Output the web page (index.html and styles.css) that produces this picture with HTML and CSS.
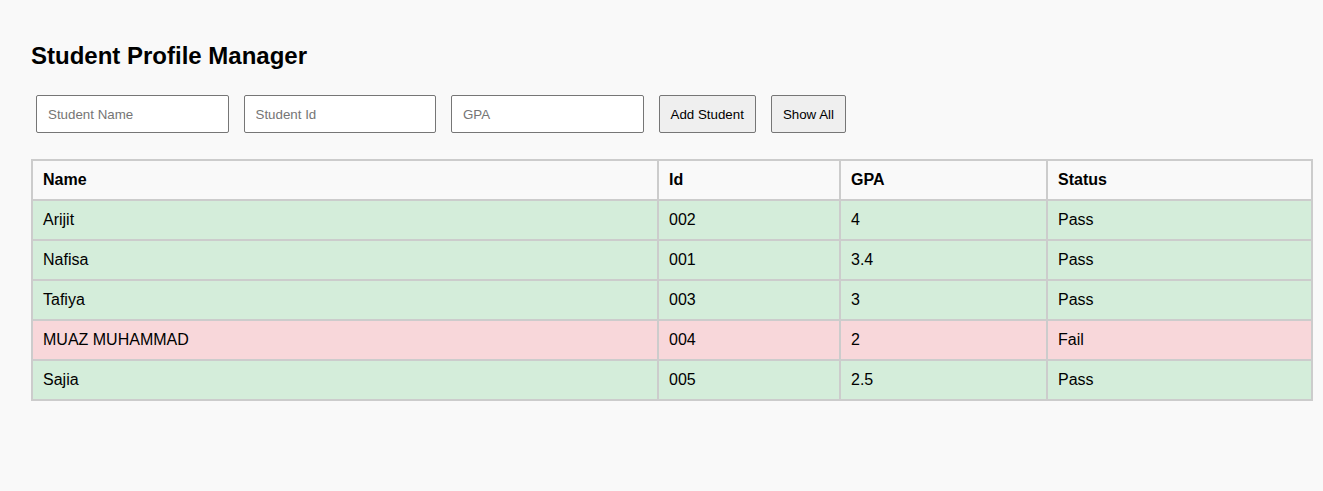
FILE: index.html
```html
<!DOCTYPE html>
<html>
<head>
<meta charset="utf-8">
<link rel="stylesheet" href="styles.css">
</head>
<body>
<div class="page">
  <h2 class="title">Student Profile Manager</h2>
  <div class="form">
    <input class="field" type="text" placeholder="Student Name">
    <input class="field" type="text" placeholder="Student Id">
    <input class="field" type="text" placeholder="GPA">
    <button class="btn btn-add">Add Student</button>
    <button class="btn">Show All</button>
  </div>
  <table class="grid">
    <thead>
      <tr>
        <th class="c-name">Name</th>
        <th class="c-id">Id</th>
        <th class="c-gpa">GPA</th>
        <th class="c-status">Status</th>
      </tr>
    </thead>
    <tbody>
      <tr class="pass"><td>Arijit</td><td>002</td><td>4</td><td>Pass</td></tr>
      <tr class="pass"><td>Nafisa</td><td>001</td><td>3.4</td><td>Pass</td></tr>
      <tr class="pass"><td>Tafiya</td><td>003</td><td>3</td><td>Pass</td></tr>
      <tr class="fail"><td>MUAZ MUHAMMAD</td><td>004</td><td>2</td><td>Fail</td></tr>
      <tr class="pass"><td>Sajia</td><td>005</td><td>2.5</td><td>Pass</td></tr>
    </tbody>
  </table>
</div>
</body>
</html>
```

FILE: styles.css
```css
html, body {
  margin: 0;
  padding: 0;
  background: #f9f9f9;
  font-family: "Liberation Sans", Arial, sans-serif;
  color: #000;
}

.page {
  padding: 42px 0 0 31px;
}

.title {
  margin: 0;
  font-size: 24px;
  font-weight: bold;
  line-height: 28px;
}

.form {
  display: flex;
  gap: 15px;
  margin-top: 25px;
  padding-left: 5px;
}

.field {
  box-sizing: border-box;
  width: 192.5px;
  height: 38px;
  padding: 0 11px;
  border: 1px solid #767676;
  border-radius: 2px;
  background: #fff;
  font-family: "Liberation Sans", Arial, sans-serif;
  font-size: 13.33px;
  margin: 0;
}

.field::placeholder {
  color: #757575;
}

.btn {
  box-sizing: border-box;
  height: 38px;
  padding: 0 11px;
  border: 1px solid #767676;
  border-radius: 2px;
  background: #efefef;
  font-family: "Liberation Sans", Arial, sans-serif;
  font-size: 13.33px;
  color: #000;
  margin: 0;
}

.grid {
  margin-top: 26px;
  border-collapse: collapse;
  table-layout: fixed;
  width: 1282px;
  font-size: 16px;
}

.grid th,
.grid td {
  border: 2px solid #ccc;
  padding: 10px 10px;
  line-height: 18px;
  text-align: left;
}

.grid th {
  font-weight: bold;
  background: #f9f9f9;
}

.c-name { width: 604px; }
.c-id { width: 160px; }
.c-gpa { width: 185px; }
.c-status { width: 243px; }

.pass td { background: #d4edda; }
.fail td { background: #f8d7da; }
```
